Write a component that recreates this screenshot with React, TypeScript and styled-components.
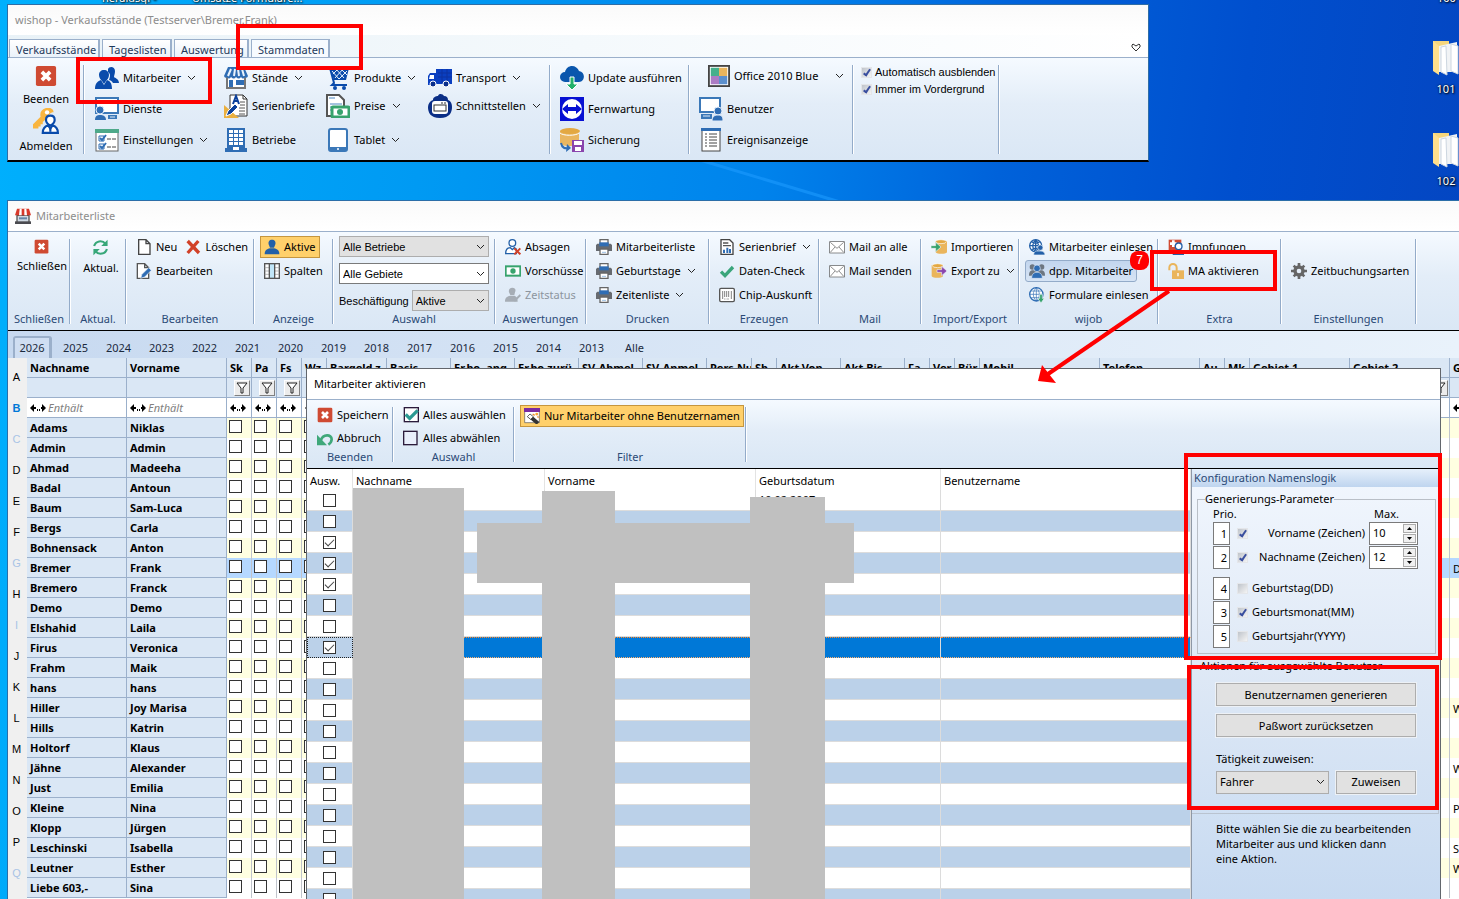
import React from "react";
import styled, { createGlobalStyle, css } from "styled-components";

const UI = '"Noto Sans", "Open Sans", sans-serif';
const PLAIN = '"Liberation Sans", Arial, sans-serif';
const LINE = "#9bb0cb";
const RIBBON = "linear-gradient(#f5faff, #e3edf8 45%, #dae7f5)";

const Global = createGlobalStyle`
  *, *::before, *::after { box-sizing: border-box; }
  html, body, #root { height: 100%; }
  body { margin: 0; overflow: hidden; font: 11px/16px ${UI}; color: #000; }
  button, input, select { font: inherit; color: inherit; margin: 0; }
`;

/* ---------- icons ---------- */

const shapes = {
  close: (
    <>
      <rect x="1" y="1" width="22" height="22" rx="2" fill="#cf4a32" />
      <path d="M7.500 7.500l9 9M16.500 7.500l-9 9" stroke="#fff" strokeWidth="4" />
    </>
  ),
  users: (
    <g fill="#0a4bab">
      <path d="M13 3c1-3 7-3 7 2 0 3-1 4-1 6 1 1 5 2 5 6h-6c-1-2-3-3-4-3 1-3 2-6-1-8z" />
      <path d="M9 4c3 0 5 2 5 5s-2 5-3 6l-2 3-2-3c-1-1-3-3-3-6s2-5 5-5z" />
      <path d="M0 23c0-6 3-8 6-9l3 5 3-5c3 1 5 3 5 9z" />
    </g>
  ),
  crowd: (
    <>
      <g fill="#6d7680">
        <circle cx="5" cy="6" r="4" />
        <circle cx="19" cy="6" r="4" />
        <path d="M0 19c0-6 2-8 6-8h12c4 0 6 2 6 8z" />
      </g>
      <circle cx="12" cy="8" r="5" fill="#2f6db4" stroke="#dfeaf7" />
      <path d="M4 23c0-6 3-9 8-9s8 3 8 9z" fill="#2f6db4" stroke="#dfeaf7" />
    </>
  ),
  keyUser: (
    <>
      <path d="M12 0c4-1 7 1 7 4-3 0-5 2-5 6l-3 1-2 2v2H7v2H5v2H0v-4l7-7c-1-4 1-7 5-8z" fill="#f9b53f" />
      <circle cx="13" cy="4" r="2" fill="#fff" />
      <path d="M16 7c3 0 4 2 4 4s-2 5-4 5-4-3-4-5 1-4 4-4z" fill="#fff" stroke="#0a4bab" strokeWidth="2" />
      <path d="M9 23c0-4 2-6 5-7l2 3 2-3c3 1 5 3 5 7z" fill="#fff" stroke="#0a4bab" strokeWidth="2" />
      <path d="M16 18v4" stroke="#0a4bab" strokeWidth="2" />
    </>
  ),
  pcUserLeft: (
    <>
      <rect x="1" y="1" width="22" height="15" fill="#fff" stroke="#3b78b8" strokeWidth="2" />
      <circle cx="5" cy="13" r="4" fill="#2f6db4" stroke="#e6effa" />
      <path d="M0 23c0-4 2-5 5-5s6 1 6 5z" fill="#2f6db4" />
      <path d="M13 18h9v4h-9z" fill="#3b78b8" />
      <path d="M15 20h5" stroke="#dfeaf7" />
    </>
  ),
  pcUser: (
    <>
      <rect x="1" y="1" width="20" height="14" fill="#fff" stroke="#3b78b8" strokeWidth="2" />
      <path d="M2 17h11v5H2z" fill="#3b78b8" />
      <path d="M4 19h7" stroke="#dfeaf7" />
      <circle cx="19" cy="14" r="4" fill="#2f6db4" stroke="#e6effa" />
      <path d="M13 24c0-4 2-6 6-6s5 2 5 6z" fill="#2f6db4" stroke="#e6effa" />
    </>
  ),
  checklist: (
    <>
      <rect x="1" y="2" width="22" height="21" fill="#fff" stroke="#666" />
      <path d="M0 1h24v4H0z" fill="#4ea98a" />
      <path d="M4 8h5v5H4zM4 16h5v5H4z" fill="none" stroke="#2f6db4" />
      <path d="M5 10l2 2 4-5M5 18l2 2 4-5" fill="none" stroke="#2f6db4" strokeWidth="2" />
      <path d="M12 11h4m1 0h4M12 19h4m1 0h4" stroke="#444" />
    </>
  ),
  store: (
    <>
      <path d="M3 10h18v12H3z" fill="#fff" stroke="#777" strokeWidth="2" />
      <path d="M4 1h16l4 9q-1 3-3 1-2 3-4 0-2 3-5 0-2 3-5 0-2 3-4 0-2 2-3-1z" fill="#2f6db4" />
      <path d="M7 3l-3 7M11 3l-1 7M14 3l1 7M18 3l2 7" stroke="#eaf3fc" strokeWidth="2" />
      <path d="M5 14h4v7H5zM12 14h8v5h-8z" fill="#2f6db4" />
    </>
  ),
  storeRed: (
    <>
      <path d="M3 11h18v11H3z" fill="#cfd9e3" stroke="#555" strokeWidth="2" />
      <path d="M0 20h24v4H0z" fill="#4a4a4f" />
      <path d="M3 1h18l3 10H0z" fill="#d8392b" />
      <path d="M7 1h3v10H6zM14 1h3l1 10h-4z" fill="#fff" />
      <path d="M6 14h12v3H6z" fill="#6787a8" />
    </>
  ),
  letterSet: (
    <>
      <path d="M6 1h13l4 4v17H6z" fill="#fff" stroke="#333" />
      <path d="M19 1v4h4" fill="none" stroke="#333" />
      <path d="M16 8h5M16 11h5M15 14h6M15 17h6M15 20h6" stroke="#555" />
      <path d="M9 10l3-8 3 8M10 7h4" fill="none" stroke="#0a3f9b" strokeWidth="2" />
      <path d="M0 11v13h15z" fill="#eab040" />
      <path d="M2 22l2-5 7-7 3 3-7 7z" fill="#0a3f9b" stroke="#fff" />
    </>
  ),
  building: (
    <>
      <path d="M3 0h18v21H3z" fill="#2f6db4" />
      <path d="M1 20h22v4H1z" fill="#2f6db4" />
      <path d="M5 2h4v3H5zm5 0h4v3h-4zm5 0h4v3h-4zM5 6h4v3H5zm5 0h4v3h-4zm5 0h4v3h-4zM5 10h4v3H5zm5 0h4v3h-4zm5 0h4v3h-4zM5 14h4v3H5zm5 0h4v3h-4zm5 0h4v3h-4z" fill="#fff" />
      <path d="M9 19h6v3H9z" fill="#fff" />
    </>
  ),
  cart: (
    <>
      <path d="M1 2h3l4 15-2 2h15" fill="none" stroke="#0a4bab" strokeWidth="2" />
      <path d="M4 2h19l-3 12H8z" fill="#0a4bab" />
      <path d="M6 5l7 8M10 3l8 9M15 3l6 6M21 5l-8 8M17 3l-8 9M12 3L7 8" stroke="#e6f0fb" />
      <circle cx="9" cy="22" r="2" fill="#0a4bab" />
      <circle cx="18" cy="22" r="2" fill="#0a4bab" />
    </>
  ),
  price: (
    <>
      <path d="M1 1h12l5 5v16H1z" fill="#fff" stroke="#555" strokeWidth="2" />
      <path d="M3 4h6M4 10h12M4 13h8M4 16h3" stroke="#4d86c0" />
      <rect x="6" y="13" width="17" height="10" rx="1" fill="#fff" stroke="#37a36d" strokeWidth="3" />
      <circle cx="14" cy="18" r="3" fill="#37a36d" />
    </>
  ),
  tablet: (
    <>
      <rect x="3" y="1" width="18" height="22" rx="2" fill="#fff" stroke="#3b78b8" strokeWidth="2" />
      <path d="M3 19h18v4H3z" fill="#3b78b8" />
      <circle cx="12" cy="21" r="1" fill="#fff" />
    </>
  ),
  truck: (
    <>
      <path d="M8 3h16v15H8zM0 10l2-3h6v12H0z" fill="#0a3fc0" />
      <path d="M2 9h4v4H1z" fill="#fff" />
      <path d="M10 7h14M10 11h14M14 3v14M19 3v14" stroke="#0d32a0" />
      <circle cx="5" cy="18" r="3" fill="#0a2f8b" stroke="#fff" />
      <circle cx="18" cy="18" r="3" fill="#0a2f8b" stroke="#fff" />
    </>
  ),
  interface: (
    <>
      <path d="M5 6c0-3 3-4 5-4 1-3 5-2 6 0 3 0 4 2 4 4 3 1 4 4 4 7 0 5-2 11-12 11S0 18 0 13c0-3 2-6 5-7z" fill="#0b2e86" />
      <rect x="4" y="7" width="16" height="13" rx="3" fill="#fff" />
      <rect x="6" y="11" width="12" height="6" fill="#fff" stroke="#333" strokeWidth="1" />
      <path d="M13 9h2M16 9h2" stroke="#333" />
    </>
  ),
  cloudDown: (
    <>
      <path d="M5 16a5 5 0 0 1 0-10c1-4 4-6 7-6s6 2 7 5c7 1 6 11 0 11z" fill="#0a56ad" />
      <path d="M10 11h4v7h4l-6 6-6-6h4z" fill="#22b06a" stroke="#fff" />
    </>
  ),
  remote: (
    <>
      <path d="M0 0h24v24H0z" fill="#0710d3" />
      <circle cx="12" cy="12" r="10" fill="#fff" />
      <path d="M2 12l6-5v3h8V7l6 5-6 5v-3H8v3z" fill="#0710d3" />
    </>
  ),
  backup: (
    <>
      <path d="M0 3v12c0 2 4 3 9 3s10-1 10-3V3z" fill="#e9b660" />
      <ellipse cx="10" cy="3" rx="10" ry="3" fill="#e3a842" />
      <path d="M0 5c3 3 16 3 19 0" fill="none" stroke="#fff" />
      <path d="M12 12h12v12H12z" fill="#8a45ad" />
      <path d="M14 13h8v4h-8zM15 19h6v4h-6z" fill="#fff" />
      <path d="M1 15c1 5 4 6 8 5" fill="none" stroke="#2f6db4" strokeWidth="2" />
      <path d="M7 16l4 4-5 4z" fill="#2f6db4" />
    </>
  ),
  swatch: (
    <>
      <rect x="1" y="1" width="22" height="22" fill="#fff" stroke="#444" strokeWidth="2" />
      <path d="M3 3h9v9H3z" fill="#45b08c" />
      <path d="M12 3h9v9h-9z" fill="#eab55c" />
      <path d="M3 12h9v9H3z" fill="#ab7cc4" />
      <path d="M12 12h9v9h-9z" fill="#5c90cd" />
    </>
  ),
  log: (
    <>
      <rect x="3" y="1" width="18" height="22" fill="#fff" stroke="#444" />
      <path d="M2 0h20v3H2z" fill="#2f6db4" />
      <path d="M6 6h2m2 0h8M6 9h2m2 0h8M6 12h2m2 0h8M6 15h2m2 0h8M6 18h2m2 0h8" stroke="#444" />
    </>
  ),
  refresh: (
    <>
      <path d="M3 10a9 9 0 0 1 16-3M21 14a9 9 0 0 1-16 3" fill="none" stroke="#37a779" strokeWidth="3" />
      <path d="M22 1v9h-9zM2 23v-9h9z" fill="#37a779" />
    </>
  ),
  file: <path d="M4 1h11l6 6v16H4zM15 1v6h6" fill="#fff" stroke="#444" strokeWidth="2" />,
  fileEdit: (
    <>
      <path d="M2 1h11l6 6v16H2zM13 1v6h6" fill="#fff" stroke="#555" strokeWidth="2" />
      <path d="M7 23l2-6 10-10 4 4-10 10z" fill="#2f6db4" stroke="#e6effa" />
    </>
  ),
  cross: <path d="M4 3l17 18M20 3L4 21" stroke="#d14128" strokeWidth="5" />,
  user: (
    <g fill="#2360a8">
      <path d="M12 1c4 0 6 3 5 7l-2 5H9L7 8c-1-4 1-7 5-7z" />
      <path d="M1 23c0-6 3-8 8-9h6c5 1 8 3 8 9z" />
    </g>
  ),
  columns: (
    <>
      <rect x="1" y="1" width="22" height="22" fill="#fff" stroke="#555" strokeWidth="2" />
      <path d="M1 7h22M1 12h22M1 17h22" stroke="#999" />
      <rect x="8" y="1" width="8" height="22" fill="#c1e6f8" stroke="#555" strokeWidth="2" />
    </>
  ),
  userX: (
    <>
      <circle cx="11" cy="6" r="5" fill="#fff" stroke="#2360a8" strokeWidth="2" />
      <path d="M1 22c0-6 3-9 7-9l3 3 3-3 3 2v7z" fill="#fff" stroke="#2360a8" strokeWidth="2" />
      <path d="M14 14l9 9M23 14l-9 9" stroke="#d14128" strokeWidth="3" />
    </>
  ),
  money: (
    <>
      <rect x="1" y="5" width="22" height="14" fill="#fff" stroke="#37a36d" strokeWidth="3" />
      <circle cx="12" cy="12" r="4" fill="#37a36d" />
    </>
  ),
  userCheck: (
    <>
      <path d="M11 1c4 0 6 3 4 7l-1 4H8L6 8c-1-4 1-7 5-7zM0 22c0-6 3-8 8-9h6c3 1 5 3 5 9z" fill="#a6adb5" />
      <path d="M11 16l4 4 8-8" fill="none" stroke="#a6adb5" strokeWidth="3" />
    </>
  ),
  printer: (
    <>
      <path d="M6 1h12v8H6z" fill="#fff" stroke="#666" strokeWidth="2" />
      <path d="M2 7h20l2 2v9H0V9z" fill="#666a70" />
      <path d="M5 5h14v6H5z" fill="#2f6db4" />
      <path d="M6 15h12v8H6z" fill="#fff" stroke="#666" strokeWidth="2" />
      <path d="M9 20h6" stroke="#6aa0d6" />
    </>
  ),
  report: (
    <>
      <path d="M3 1h13l5 5v17H3z" fill="#fff" stroke="#444" strokeWidth="2" />
      <path d="M6 6h8M6 10h12" stroke="#555" strokeWidth="2" />
      <path d="M6 16h3v5H6zM11 13h3v8h-3zM15 15h3v6h-3z" fill="#2f6db4" />
    </>
  ),
  check: <path d="M3 13l6 6L21 6" fill="none" stroke="#3aa57b" strokeWidth="5" />,
  barcode: (
    <>
      <rect x="1" y="2" width="22" height="20" rx="2" fill="#fff" stroke="#555" strokeWidth="2" />
      <path d="M5.500 6v12M8.500 6v9M11.500 6v9M14.500 6v9M18.500 6v12" stroke="#444" strokeWidth="1" />
      <path d="M8 18h8" stroke="#444" strokeDasharray="1 1" />
    </>
  ),
  mail: (
    <>
      <rect x="1" y="4" width="22" height="17" fill="#fff" stroke="#555" strokeWidth="1" />
      <path d="M2 5l10 9L22 5M2 20l7-8M22 20l-7-8" fill="none" stroke="#555" />
    </>
  ),
  dbIn: (
    <>
      <path d="M7 3v17c2 3 15 3 17 0V3z" fill="#eab55c" />
      <ellipse cx="15" cy="4" rx="8" ry="3" fill="#e3a842" stroke="#fff" />
      <path d="M0 10h7V5l8 7-8 7v-5H0z" fill="#37a36d" stroke="#e9f1fa" />
    </>
  ),
  dbOut: (
    <>
      <path d="M1 3v17c2 3 15 3 17 0V3z" fill="#eab55c" />
      <ellipse cx="10" cy="4" rx="8" ry="3" fill="#e3a842" stroke="#fff" />
      <path d="M9 10h7V5l8 7-8 7v-5H9z" fill="#8a45ad" stroke="#e9f1fa" />
    </>
  ),
  globeUser: (
    <>
      <circle cx="10" cy="10" r="9" fill="#fff" stroke="#2360a8" strokeWidth="2" />
      <path d="M1 10h18M10 1v18M4 4c4 3 8 3 12 0M4 16c4-3 8-3 12 0M10 1c-6 6-6 12 0 18M10 1c6 6 6 12 0 18" fill="none" stroke="#2360a8" strokeWidth="2" />
      <circle cx="17" cy="13" r="4" fill="#2360a8" stroke="#e9f1fa" />
      <path d="M7 24c0-5 3-6 5-6h6c3 0 6 2 6 6z" fill="#2360a8" stroke="#e9f1fa" />
    </>
  ),
  globeDown: (
    <>
      <circle cx="11" cy="11" r="10" fill="#fff" stroke="#2f6db4" strokeWidth="2" />
      <path d="M1 11h20M11 1v20M3 6h16M3 16h16M11 1c-6 6-6 14 0 20M11 1c6 6 6 14 0 20" fill="none" stroke="#2f6db4" />
      <path d="M16 11h4v6h3l-5 7-5-7h3z" fill="#37a36d" stroke="#e9f1fa" />
    </>
  ),
  vaccine: (
    <>
      <path d="M1 1h19v17H1z" fill="#d14b32" />
      <path d="M6 2h4v3h3v4h-3v3H6V9H3V5h3z" fill="#fff" />
      <circle cx="16" cy="11" r="5" fill="#fff" stroke="#2360a8" strokeWidth="2" />
      <path d="M7 24c0-5 3-7 9-7s8 2 8 7z" fill="#2360a8" />
    </>
  ),
  unlock: (
    <>
      <path d="M2 11V7a5 5 0 0 1 11 0v5" fill="none" stroke="#eab55c" strokeWidth="3" />
      <path d="M6 11h18v13H6z" fill="#eab55c" />
      <path d="M14 15h2v5h-2z" fill="#fff" />
    </>
  ),
  gear: (
    <>
      <circle cx="12" cy="12" r="6" fill="none" stroke="#666" strokeWidth="5" />
      <path d="M12 0v5M12 19v5M0 12h5M19 12h5M4 4l3 3M17 17l3 3M20 4l-3 3M7 17l-3 3" stroke="#666" strokeWidth="4" />
    </>
  ),
  undo: (
    <>
      <path d="M6 15c3-9 16-9 16-1 0 3-2 6-5 8" fill="none" stroke="#3fa87a" strokeWidth="4" />
      <path d="M0 7v16h15z" fill="#3fa87a" />
    </>
  ),
  boxChecked: (
    <>
      <rect x="2" y="1" width="21" height="21" fill="#fff" stroke="#2b1b3b" strokeWidth="2" />
      <path d="M4 11l6 6L22 5" fill="none" stroke="#2b9a93" strokeWidth="5" />
    </>
  ),
  box: <rect x="1" y="2" width="20" height="20" fill="#e9effb" stroke="#2b1b3b" strokeWidth="2" />,
  wizard: (
    <>
      <path d="M1 1h22v21H1z" fill="#fff" stroke="#555" />
      <path d="M0 0h24v6H0z" fill="#7a2ba0" />
      <path d="M13 9l3 2M20 8l-1 3M22 14l-2-1" stroke="#f08a28" strokeWidth="2" />
      <circle cx="19" cy="9" r="2" fill="#f6a435" />
      <path d="M5 13l4-4 14 12-4 4z" fill="#333" />
      <path d="M5 13l4-4 5 4-4 4z" fill="#fff" stroke="#333" />
    </>
  ),
};

type IconName = keyof typeof shapes;

const Svg = styled.svg<{ $s: number }>`
  display: block;
  flex: none;
  width: ${(p) => p.$s}px;
  height: ${(p) => p.$s}px;
`;

const Icon = ({ name, size = 16 }: { name: IconName; size?: number }) => (
  <Svg $s={size} viewBox="0 0 24 24" aria-hidden="true">
    {shapes[name]}
  </Svg>
);

const Arrow = styled.svg`
  display: block;
  flex: none;
  width: 9px;
  height: 6px;
  margin-left: 2px;
`;

const Down = () => (
  <Arrow viewBox="0 0 9 6" aria-hidden="true">
    <path d="M1 1l3.500 3.500L8 1" fill="none" stroke="#222" />
  </Arrow>
);

/* ---------- desktop ---------- */

const Desktop = styled.main`
  position: relative;
  height: 100vh;
  overflow: hidden;
  background: linear-gradient(97deg, #00b0fd, #009af3 28%, #0083ec 50%, #0062da 65%, #004fce 80%, #0543be);
`;

const Streak = styled.svg`
  position: absolute;
  left: 690px;
  top: 160px;
  width: 160px;
  height: 42px;
`;

const DeskItem = styled.div<{ $x: number; $y: number }>`
  position: absolute;
  left: ${(p) => p.$x}px;
  top: ${(p) => p.$y}px;
  display: flex;
  flex-direction: column;
  align-items: center;
  gap: 5px;
  color: #fff;
  white-space: nowrap;
  text-shadow: 1px 1px 2px #000, 0 0 2px #000;
`;

const FolderSvg = styled.svg`
  width: 28px;
  height: 36px;
`;

const Folder = () => (
  <FolderSvg viewBox="0 0 28 36" aria-hidden="true">
    <path d="M1 1h16v30l-10 1-6-3z" fill="#f6d67c" />
    <path d="M7 6l18-4v30H7z" fill="#f1f3f5" />
    <path d="M9 7l5-1 1 29-6-3zM19 4l7 2v28l-7-3z" fill="#fff" stroke="#cdd6e0" />
    <path d="M1 1l6 5v29l-6-4z" fill="#ffdf8c" />
  </FolderSvg>
);

/* ---------- windows ---------- */

const Window = styled.section<{ $z: number }>`
  position: absolute;
  z-index: ${(p) => p.$z};
  display: flex;
  flex-direction: column;
  overflow: hidden;
  background: #fff;
`;

const ShopWindow = styled(Window)`
  left: 7px;
  top: 4px;
  width: 1142px;
  border: 1px solid #2f6da5;
  border-bottom: 2px solid #000;
`;

const ListWindow = styled(Window)`
  left: 7px;
  top: 200px;
  right: 0;
  bottom: 0;
  border: solid #2b6ea8;
  border-width: 1px 0 0 1px;
`;

const Dialog = styled(Window)`
  left: 306px;
  top: 368px;
  right: 18px;
  bottom: 0;
  border: solid #62666c;
  border-width: 1px 1px 0;
`;

const TitleBar = styled.header<{ $active?: boolean }>`
  display: flex;
  align-items: center;
  gap: 5px;
  height: ${(p) => (p.$active ? 30 : 30)}px;
  flex: none;
  padding-left: 7px;
  color: ${(p) => (p.$active ? "#000" : "#8c8c8c")};
  background: ${(p) => (p.$active ? "#fff" : "linear-gradient(#fafafa, #fff)")};
`;

const Title = styled.h1`
  margin: 0;
  font: inherit;
`;

const TabStrip = styled.nav`
  display: flex;
  align-items: flex-end;
  gap: 2px;
  height: 23px;
  padding: 0 7px 0 1px;
  border-bottom: 1px solid ${LINE};
  background: linear-gradient(90deg, #e9f2f7, #f4f9fc 50%, #fff);
`;

const Tab = styled.button<{ $w: number; $on?: boolean }>`
  flex: none;
  width: ${(p) => p.$w}px;
  height: 18px;
  padding: 2px 0 0 6px;
  border: 1px solid ${LINE};
  border-bottom: 0;
  border-right: 2px solid ${LINE};
  background: ${(p) => (p.$on ? "#f7fbff" : "linear-gradient(#fff, #eaf2fa)")};
  color: #1e395b;
  line-height: 15px;
  text-align: left;
  white-space: nowrap;
`;

const Collapse = styled.button`
  margin: 0 0 2px auto;
  padding: 0;
  border: 0;
  background: none;
  width: 10px;
  height: 14px;
`;

const Ribbon = styled.div<{ $h: number }>`
  display: flex;
  flex: none;
  height: ${(p) => p.$h}px;
  background: ${RIBBON};
  white-space: nowrap;
`;

const Framed = styled(Ribbon)`
  border-top: 1px solid ${LINE};
  border-bottom: 1px solid #000;
`;

const Group = styled.div<{ $w: number }>`
  position: relative;
  display: flex;
  flex-direction: column;
  flex: none;
  width: ${(p) => p.$w}px;
  padding: 3px 0 0 6px;
  &::after {
    content: "";
    position: absolute;
    right: -1px;
    top: 7px;
    bottom: 6px;
    width: 2px;
    background: linear-gradient(90deg, #93abc9 50%, #fff 50%);
  }
`;

const Caption = styled.div`
  margin: auto 0 3px -6px;
  color: #2b4a76;
  text-align: center;
`;

const Line = styled.div<{ $h?: number; $gap?: number }>`
  display: flex;
  align-items: center;
  gap: ${(p) => p.$gap ?? 0}px;
  height: ${(p) => p.$h ?? 24}px;
`;

const toolState = {
  hot: css`
    border-color: #c5963f;
    background: #ffd06b;
  `,
  lit: css`
    border-color: #93abc9;
    border-radius: 3px;
    background: linear-gradient(#c3d6ee, #d6e4f5);
  `,
};

const Tool = styled.button<{ $state?: "hot" | "lit" }>`
  display: inline-flex;
  align-items: center;
  gap: 4px;
  height: 22px;
  padding: 0 3px;
  border: 1px solid transparent;
  background: none;
  white-space: nowrap;
  &:disabled {
    color: #8d959e;
  }
  ${(p) => p.$state && toolState[p.$state]}
`;

const BigTool = styled.button`
  display: flex;
  flex-direction: column;
  align-items: center;
  gap: 4px;
  padding: 0;
  border: 0;
  background: none;
`;

type Item = { icon: IconName; label: string; menu?: boolean; off?: boolean; state?: "hot" | "lit" };

const ToolItem = ({ icon, label, menu, off, state, size }: Item & { size?: number }) => (
  <Tool type="button" disabled={off} $state={state}>
    <Icon name={icon} size={size} />
    {label}
    {menu && <Down />}
  </Tool>
);

/* ---------- shop window ---------- */

const SessionGroup = styled(Group)`
  padding: 7px 0 0;
  gap: 1px;
`;

const ShopGroup = styled(Group)<{ $pad?: number }>`
  flex-direction: row;
  padding: 5px 0 0 ${(p) => p.$pad ?? 6}px;
`;

const Stack = styled.div<{ $rows: string; $w?: number }>`
  display: grid;
  grid-template-rows: ${(p) => p.$rows};
  align-items: center;
  justify-items: start;
  align-content: start;
  width: ${(p) => (p.$w ? `${p.$w}px` : "auto")};
`;

const EVEN = "30px 32px 30px";
const TIGHT = "30px 26px 42px";

const shopColumns: { w: number; rows: string; items: Item[] }[] = [
  {
    w: 129,
    rows: EVEN,
    items: [
      { icon: "users", label: "Mitarbeiter", menu: true },
      { icon: "pcUserLeft", label: "Dienste" },
      { icon: "checklist", label: "Einstellungen", menu: true },
    ],
  },
  {
    w: 102,
    rows: TIGHT,
    items: [
      { icon: "store", label: "Stände", menu: true },
      { icon: "letterSet", label: "Serienbriefe" },
      { icon: "building", label: "Betriebe" },
    ],
  },
  {
    w: 102,
    rows: TIGHT,
    items: [
      { icon: "cart", label: "Produkte", menu: true },
      { icon: "price", label: "Preise", menu: true },
      { icon: "tablet", label: "Tablet", menu: true },
    ],
  },
  {
    w: 120,
    rows: TIGHT,
    items: [
      { icon: "truck", label: "Transport", menu: true },
      { icon: "interface", label: "Schnittstellen", menu: true },
    ],
  },
];

const OfficeTool = styled(Tool)`
  margin-left: 9px;
  & > svg:last-child {
    margin-left: 13px;
  }
`;

const OptionList = styled.div`
  display: flex;
  flex-direction: column;
  gap: 1px;
  padding: 1px 0 0 3px;
  font-family: ${PLAIN};
`;

const Option = styled.label`
  display: flex;
  align-items: center;
  gap: 4px;
`;

const MiniCheck = styled.input.attrs({ type: "checkbox" })`
  appearance: none;
  display: grid;
  flex: none;
  width: 9px;
  height: 9px;
  background: linear-gradient(135deg, #bfc4cb, #f4f4f4);
  outline: 1px solid #e4e6ea;
  &:checked::after {
    content: "";
    width: 4px;
    height: 8px;
    margin-left: 3px;
    border: solid #3a4f9f;
    border-width: 0 2px 2px 0;
    transform: rotate(35deg);
  }
`;

const ShopApp = () => (
  <ShopWindow $z={1} aria-label="wishop">
    <TitleBar>
      <Title>wishop - Verkaufsstände (Testserver\Bremer.Frank)</Title>
    </TitleBar>
    <TabStrip>
      <Tab type="button" $w={91}>Verkaufsstände</Tab>
      <Tab type="button" $w={70}>Tageslisten</Tab>
      <Tab type="button" $w={75}>Auswertung</Tab>
      <Tab type="button" $w={79} $on>Stammdaten</Tab>
      <Collapse type="button" aria-label="Menüband einklappen">
        <svg width="10" height="10" viewBox="0 0 10 10" aria-hidden="true">
          <path d="M1 2l1-1 3 2 3-2 1 1v2L5 8 1 4z" fill="#fff" stroke="#333" />
        </svg>
      </Collapse>
    </TabStrip>
    <Ribbon $h={102}>
      <SessionGroup $w={76}>
        <BigTool type="button">
          <Icon name="close" size={22} />
          Beenden
        </BigTool>
        <BigTool type="button">
          <Icon name="keyUser" size={26} />
          Abmelden
        </BigTool>
      </SessionGroup>
      <ShopGroup $w={466} $pad={7}>
        {shopColumns.map((c) => (
          <Stack key={c.items[0].label} $rows={c.rows} $w={c.w}>
            {c.items.map((i) => (
              <ToolItem key={i.label} {...i} size={24} />
            ))}
          </Stack>
        ))}
      </ShopGroup>
      <ShopGroup $w={139}>
        <Stack $rows={EVEN}>
          <ToolItem icon="cloudDown" label="Update ausführen" size={24} />
          <ToolItem icon="remote" label="Fernwartung" size={24} />
          <ToolItem icon="backup" label="Sicherung" size={24} />
        </Stack>
      </ShopGroup>
      <ShopGroup $w={164}>
        <Stack $rows="26px 40px 22px">
          <OfficeTool type="button">
            <Icon name="swatch" size={22} />
            Office 2010 Blue
            <Down />
          </OfficeTool>
          <ToolItem icon="pcUser" label="Benutzer" size={24} />
          <ToolItem icon="log" label="Ereignisanzeige" size={24} />
        </Stack>
      </ShopGroup>
      <ShopGroup $w={146}>
        <OptionList>
          <Option>
            <MiniCheck defaultChecked /> Automatisch ausblenden
          </Option>
          <Option>
            <MiniCheck defaultChecked /> Immer im Vordergrund
          </Option>
        </OptionList>
      </ShopGroup>
    </Ribbon>
  </ShopWindow>
);

/* ---------- staff list window ---------- */

const Wide = styled.div`
  display: flex;
  justify-content: center;
  padding-top: 4px;
`;

const SelectBox = styled.span<{ $w: number; $h: number; $grey?: boolean }>`
  position: relative;
  display: block;
  width: ${(p) => p.$w}px;
  height: ${(p) => p.$h}px;
  & > select {
    appearance: none;
    width: 100%;
    height: 100%;
    padding: 0 3px;
    border: 1px solid ${(p) => (p.$grey ? "#adadad" : "#7a7a7a")};
    border-radius: 0;
    background: ${(p) => (p.$grey ? "#e1e1e1" : "#fff")};
  }
  & > svg {
    position: absolute;
    right: 4px;
    top: calc(50% - 3px);
  }
`;

const Picker = ({ label, value, w, h = 21, grey, id }: { label: string; value: string; w: number; h?: number; grey?: boolean; id?: string }) => (
  <SelectBox $w={w} $h={h} $grey={grey}>
    <select id={id} aria-label={label} defaultValue={value}>
      <option>{value}</option>
    </select>
    <Down />
  </SelectBox>
);

const Pickers = styled.div`
  display: flex;
  flex-direction: column;
  gap: 6px;
  padding-top: 1px;
  font-family: ${PLAIN};
`;

const listGroups: { name: string; w: number; items: (Item | null)[] }[] = [
  {
    name: "Auswertungen",
    w: 91,
    items: [
      { icon: "userX", label: "Absagen" },
      { icon: "money", label: "Vorschüsse" },
      { icon: "userCheck", label: "Zeitstatus", off: true },
    ],
  },
  {
    name: "Drucken",
    w: 123,
    items: [
      { icon: "printer", label: "Mitarbeiterliste" },
      { icon: "printer", label: "Geburtstage", menu: true },
      { icon: "printer", label: "Zeitenliste", menu: true },
    ],
  },
  {
    name: "Erzeugen",
    w: 110,
    items: [
      { icon: "report", label: "Serienbrief", menu: true },
      { icon: "check", label: "Daten-Check" },
      { icon: "barcode", label: "Chip-Auskunft" },
    ],
  },
  {
    name: "Mail",
    w: 102,
    items: [
      { icon: "mail", label: "Mail an alle" },
      { icon: "mail", label: "Mail senden" },
    ],
  },
  {
    name: "Import/Export",
    w: 98,
    items: [
      { icon: "dbIn", label: "Importieren" },
      { icon: "dbOut", label: "Export zu", menu: true },
    ],
  },
  {
    name: "wijob",
    w: 139,
    items: [
      { icon: "globeUser", label: "Mitarbeiter einlesen" },
      { icon: "crowd", label: "dpp. Mitarbeiter", state: "lit" },
      { icon: "globeDown", label: "Formulare einlesen" },
    ],
  },
  {
    name: "Extra",
    w: 123,
    items: [
      { icon: "vaccine", label: "Impfungen" },
      { icon: "unlock", label: "MA aktivieren" },
    ],
  },
  { name: "Einstellungen", w: 135, items: [null, { icon: "gear", label: "Zeitbuchungsarten" }] },
];

const YearBar = styled.nav`
  display: flex;
  align-items: flex-end;
  flex: none;
  height: 27px;
  padding-left: 5px;
  background: linear-gradient(90deg, #c7d9f0, #d6e4f5 40%, #e9f2fb);
`;

const Year = styled.button<{ $on?: boolean }>`
  width: ${(p) => (p.$on ? "39px" : "43px")};
  height: 22px;
  padding: ${(p) => (p.$on ? "0" : "2px 0 0")};
  margin-right: ${(p) => (p.$on ? "2px" : "0")};
  border: ${(p) => (p.$on ? "2px solid #9bb0cb" : "0")};
  border-bottom: 0;
  border-right-width: ${(p) => (p.$on ? "3px" : "0")};
  border-radius: 3px 3px 0 0;
  background: ${(p) => (p.$on ? "#cfdef2" : "none")};
  color: #1b2a3d;
`;

const ListBody = styled.div`
  display: flex;
  flex: 1;
  min-height: 0;
  overflow: hidden;
`;

const Letters = styled.nav`
  display: flex;
  flex-direction: column;
  flex: none;
  width: 19px;
  padding-top: 3px;
  background: #f0f0f0;
  font-family: ${PLAIN};
`;

const Letter = styled.button<{ $tone: string }>`
  flex: none;
  height: 31px;
  padding: 0 2px 0 0;
  border: 0;
  background: none;
  color: ${(p) => p.$tone};
  font-weight: ${(p) => (p.$tone === "#0078d7" ? 700 : 400)};
`;

const Scroller = styled.div`
  flex: 1;
  min-width: 0;
  overflow: hidden;
`;

const Grid = styled.table`
  table-layout: fixed;
  width: max(100%, 1520px);
  border-collapse: separate;
  border-spacing: 0;
  white-space: nowrap;
  & th,
  & td {
    height: 20px;
    padding: 0 0 0 3px;
    overflow: hidden;
    text-align: left;
    line-height: 15px;
    border-right: 1px solid ${LINE};
  }
  & thead th,
  & thead td {
    border-bottom: 1px solid ${LINE};
    background: #dae7f5;
  }
  & thead tr:last-child td {
    background: #fff;
  }
`;

const NameCell = styled.th`
  background: #dae7f5;
  border-bottom: 1px solid ${LINE};
`;

const DataRow = styled.tr<{ $bg: string }>`
  & > td {
    background: ${(p) => p.$bg};
    border-right-color: #c0c4cc;
  }
`;

const Check = styled.input.attrs({ type: "checkbox" })`
  appearance: none;
  display: grid;
  place-items: start center;
  width: 13px;
  height: 13px;
  border: 1px solid #333;
  background: #fff;
  &:checked::after {
    content: "";
    width: 5px;
    height: 9px;
    border: solid #444;
    border-width: 0 1px 1px 0;
    transform: rotate(45deg);
  }
`;

const ListCheck = styled(Check)`
  margin: 0 0 4px -1px;
`;

const FilterButton = styled.button`
  display: grid;
  place-items: center;
  width: 16px;
  height: 16px;
  margin: 0 1px 0 auto;
  padding: 0;
  border: 1px solid #fff;
  border-right-color: #808080;
  border-bottom-color: #808080;
  background: #ececec;
`;

const Contains = styled.label`
  display: flex;
  align-items: center;
  gap: 2px;
  & > input {
    width: 60px;
    padding: 0;
    border: 0;
    font-style: italic;
    background: none;
  }
  & > input::placeholder {
    color: #808080;
  }
`;

const Wild = () => (
  <svg width="16" height="8" viewBox="0 0 16 8" aria-hidden="true">
    <path d="M0 4l4-4v3h2v2H4v3zM16 4l-4-4v3h-1v2h1v3z" fill="#000" />
    <path d="M7 5h1v2H7zM9 5h1v2H9z" fill="#000" />
  </svg>
);

const columns: [string, number][] = [
  ["Nachname", 100], ["Vorname", 100], ["Sk", 25], ["Pa", 25], ["Fs", 25], ["Wz", 25],
  ["Bargeld z", 60], ["Basis", 64], ["Er.bo. ang", 64], ["Er.bo.zurü", 64], ["SV-Abmel", 64],
  ["SV-Anmel", 64], ["Pers.Nu", 45], ["Sb", 25], ["Akt.Von", 64], ["Akt.Bis", 64], ["Fa", 25],
  ["Ver", 25], ["Bür", 25], ["Mobil", 120], ["Telefon", 100], ["Au", 25], ["Mk", 25],
  ["Gebiet 1", 100], ["Gebiet 2", 100], ["Gebiet 3", 0],
];

const people: [string, string, string?][] = [
  ["Adams", "Niklas"], ["Admin", "Admin"], ["Ahmad", "Madeeha"], ["Badal", "Antoun"],
  ["Baum", "Sam-Luca"], ["Bergs", "Carla"], ["Bohnensack", "Anton"], ["Bremer", "Frank", "D"],
  ["Bremero", "Franck"], ["Demo", "Demo"], ["Elshahid", "Laila"], ["Firus", "Veronica"],
  ["Frahm", "Maik"], ["hans", "hans"], ["Hiller", "Joy Marisa", "W"], ["Hills", "Katrin"],
  ["Holtorf", "Klaus"], ["Jähne", "Alexander", "W"], ["Just", "Emilia"], ["Kleine", "Nina", "Pa"],
  ["Klopp", "Jürgen"], ["Leschinski", "Isabella", "Sp"], ["Leutner", "Esther", "W"],
  ["Liebe 603,-", "Sina"],
];

const years = ["2026", "2025", "2024", "2023", "2022", "2021", "2020", "2019", "2018", "2017", "2016", "2015", "2014", "2013", "Alle"];

const letterTone = (l: string) => (l === "B" ? "#0078d7" : "CGIQ".includes(l) ? "#a9c4e6" : "#000");

const StaffList = () => (
  <ListWindow $z={2} aria-label="Mitarbeiterliste">
    <TitleBar>
      <Icon name="storeRed" />
      <Title>Mitarbeiterliste</Title>
    </TitleBar>
    <Framed $h={100}>
      <Group $w={62}>
        <Wide>
          <BigTool type="button">
            <Icon name="close" size={15} />
            Schließen
          </BigTool>
        </Wide>
        <Caption>Schließen</Caption>
      </Group>
      <Group $w={56}>
        <Wide>
          <BigTool type="button">
            <Icon name="refresh" size={17} />
            Aktual.
          </BigTool>
        </Wide>
        <Caption>Aktual.</Caption>
      </Group>
      <Group $w={128}>
        <Line>
          <ToolItem icon="file" label="Neu" />
          <ToolItem icon="cross" label="Löschen" />
        </Line>
        <Line>
          <ToolItem icon="fileEdit" label="Bearbeiten" />
        </Line>
        <Caption>Bearbeiten</Caption>
      </Group>
      <Group $w={79}>
        <Line>
          <ToolItem icon="user" label="Aktive" state="hot" />
        </Line>
        <Line>
          <ToolItem icon="columns" label="Spalten" />
        </Line>
        <Caption>Anzeige</Caption>
      </Group>
      <Group $w={162}>
        <Pickers>
          <Picker label="Betrieb" value="Alle Betriebe" w={150} grey />
          <Picker label="Gebiet" value="Alle Gebiete" w={150} />
          <Line $h={21} $gap={3}>
            <label htmlFor="employment">Beschäftigung</label>
            <Picker id="employment" label="Beschäftigung" value="Aktive" w={77} grey />
          </Line>
        </Pickers>
        <Caption>Auswahl</Caption>
      </Group>
      {listGroups.map((g) => (
        <Group key={g.name} $w={g.w}>
          {g.items.map((i, n) => (
            <Line key={n}>{i && <ToolItem {...i} />}</Line>
          ))}
          <Caption>{g.name}</Caption>
        </Group>
      ))}
    </Framed>
    <YearBar>
      {years.map((y, n) => (
        <Year key={y} type="button" $on={n === 0}>{y}</Year>
      ))}
    </YearBar>
    <ListBody>
      <Letters>
        {"ABCDEFGHIJKLMNOPQ".split("").map((l) => (
          <Letter key={l} type="button" $tone={letterTone(l)}>{l}</Letter>
        ))}
      </Letters>
      <Scroller>
        <Grid>
          <colgroup>
            {columns.map(([name, w]) => (
              <col key={name} width={w || undefined} />
            ))}
          </colgroup>
          <thead>
            <tr>
              {columns.map(([name]) => (
                <th key={name} scope="col">{name}</th>
              ))}
            </tr>
            <tr>
              {columns.map(([name], n) => (
                <td key={name}>
                  {n > 1 && (
                    <FilterButton type="button" aria-label={`Filter ${name}`}>
                      <svg width="12" height="12" viewBox="0 0 12 12" aria-hidden="true">
                        <path d="M1 1h10L7 6v5H5V6z" fill="#fff" stroke="#222" />
                      </svg>
                    </FilterButton>
                  )}
                </td>
              ))}
            </tr>
            <tr>
              {columns.map(([name], n) => (
                <td key={name}>
                  <Contains>
                    <Wild />
                    {n < 2 && <input placeholder="Enthält" aria-label={`${name} enthält`} />}
                  </Contains>
                </td>
              ))}
            </tr>
          </thead>
          <tbody>
            {people.map(([last, first, area], r) => (
              <DataRow key={r} $bg={last === "Bremer" ? "#b5d8ff" : r % 2 ? "#fff" : "#ffffe1"}>
                <NameCell scope="row">{last}</NameCell>
                <NameCell>{first}</NameCell>
                {columns.slice(2).map(([name], n) => (
                  <td key={name}>
                    {n < 4 && <ListCheck aria-label={`${name} ${first} ${last}`} />}
                    {name === "Gebiet 3" && area}
                  </td>
                ))}
              </DataRow>
            ))}
          </tbody>
        </Grid>
      </Scroller>
    </ListBody>
  </ListWindow>
);

/* ---------- activation dialog ---------- */

const DialogGroup = styled(Group)`
  padding-top: 4px;
`;

const DialogBody = styled.div`
  display: flex;
  flex: 1;
  min-height: 0;
  overflow: hidden;
`;

const TablePane = styled.div`
  flex: 1;
  min-width: 0;
  overflow: hidden;
`;

const Accounts = styled.table`
  table-layout: fixed;
  width: 100%;
  border-collapse: separate;
  border-spacing: 0;
  & th {
    height: 21px;
    padding: 2px 0 0 3px;
    font-weight: 400;
    text-align: left;
    border-right: 1px solid #e3e3e3;
  }
  & td {
    height: 21px;
    padding: 0 0 0 3px;
    line-height: 16px;
    border-right: 1px solid #dcdcdc;
    border-bottom: 1px solid #dcdcdc;
  }
`;

const AccountRow = styled.tr<{ $alt: boolean; $sel: boolean }>`
  & > td {
    background: ${(p) => (p.$sel ? "#0078d7" : p.$alt ? "#bbd1e9" : "#fff")};
    ${(p) => p.$sel && "border-top: 1px dotted #ff8728; border-bottom: 1px dotted #ffb070;"}
  }
  & > td:first-child {
    background: ${(p) => (p.$alt ? "#bbd1e9" : "#fff")};
    ${(p) => p.$sel && "outline: 1px dotted #222; outline-offset: -1px; border-color: #bbd1e9;"}
  }
  & input {
    margin: 0 0 0 13px;
  }
`;

const Side = styled.aside`
  display: flex;
  flex-direction: column;
  flex: none;
  width: 249px;
  border-left: 1px solid #8e98a6;
  background: linear-gradient(#f2f7fe, #dfe9f6 45%, #c7daf1);
`;

const SideTitle = styled.h2`
  margin: 0;
  height: 18px;
  padding-left: 2px;
  font: inherit;
  line-height: 17px;
  color: #2b4a76;
  background: linear-gradient(#e6f0fb, #bfd5ef);
`;

const Params = styled.fieldset`
  margin: 4px 4px 0 5px;
  padding: 0 17px 5px 15px;
  border: 1px solid #b9bfc7;
  min-width: 0;
`;

const Legend = styled.legend`
  margin-left: -8px;
  padding: 0;
  line-height: 16px;
`;

const ParamHead = styled.div`
  display: flex;
  justify-content: space-between;
  padding-right: 19px;
  line-height: 14px;
`;

const ParamRow = styled.div`
  display: grid;
  grid-template-columns: 17px 9px 1fr auto;
  align-items: center;
  column-gap: 8px;
  height: 24px;
  & > label {
    margin-left: -3px;
  }
`;

const NumRow = styled(ParamRow)`
  column-gap: 4px;
  grid-template-columns: 21px 13px 1fr auto;
  & > label {
    margin: 0;
    text-align: right;
  }
`;

const Prio = styled.input`
  width: 17px;
  height: 23px;
  padding: 0 2px 0 0;
  border: 1px solid #7a7a7a;
  background: #fff;
  text-align: right;
`;

const Spin = styled.span`
  display: flex;
  align-items: center;
  width: 49px;
  height: 23px;
  padding-right: 1px;
  border: 1px solid #7a7a7a;
  background: #fff;
  & > input {
    flex: 1;
    min-width: 0;
    padding: 0 0 0 3px;
    border: 0;
    background: none;
  }
`;

const Steps = styled.span`
  display: grid;
  gap: 1px;
  & > button {
    display: grid;
    place-items: center;
    width: 13px;
    height: 9px;
    padding: 0;
    border: 1px solid #acacac;
    background: #f0f0f0;
  }
`;

const Spinner = ({ id, value }: { id: string; value: string }) => (
  <Spin>
    <input id={id} defaultValue={value} />
    <Steps>
      <button type="button" aria-label="mehr">
        <svg width="5" height="3" viewBox="0 0 5 3"><path d="M0 3l2.500-3L5 3z" /></svg>
      </button>
      <button type="button" aria-label="weniger">
        <svg width="5" height="3" viewBox="0 0 5 3"><path d="M0 0l2.500 3L5 0z" /></svg>
      </button>
    </Steps>
  </Spin>
);

const Spacer = styled.div`
  height: 7px;
`;

const Actions = styled.fieldset`
  margin: 4px 1px 0 0;
  padding: 9px 22px 19px 24px;
  border: 1px solid #b9c3d0;
  border-left: 0;
  min-width: 0;
  & > legend {
    margin-left: -16px;
  }
`;

const PushButton = styled.button<{ $w?: number }>`
  display: block;
  width: ${(p) => (p.$w ? `${p.$w}px` : "100%")};
  height: 23px;
  padding: 0;
  border: 1px solid #adadad;
  outline: 1px solid #edf1f6;
  background: #e1e1e1;
  & + & {
    margin-top: 8px;
  }
`;

const AssignLabel = styled.label`
  display: block;
  margin: 14px 0 3px;
`;

const Hint = styled.p`
  margin: 7px 20px 0 24px;
  line-height: 15px;
`;

const numberParams = [
  { prio: "1", id: "first", label: "Vorname (Zeichen)", value: "10" },
  { prio: "2", id: "last", label: "Nachname (Zeichen)", value: "12" },
];
const dateParams = [
  { prio: "4", id: "day", label: "Geburtstag(DD)", on: false },
  { prio: "3", id: "month", label: "Geburtsmonat(MM)", on: true },
  { prio: "5", id: "year", label: "Geburtsjahr(YYYY)", on: false },
];
const ticked = [2, 3, 4, 7];

const ActivateDialog = () => (
  <Dialog $z={3} role="dialog" aria-label="Mitarbeiter aktivieren">
    <TitleBar $active>
      <Title>Mitarbeiter aktivieren</Title>
    </TitleBar>
    <Framed $h={70}>
      <DialogGroup $w={86}>
        <Line $h={23}><ToolItem icon="close" label="Speichern" /></Line>
        <Line $h={23}><ToolItem icon="undo" label="Abbruch" /></Line>
        <Caption>Beenden</Caption>
      </DialogGroup>
      <DialogGroup $w={121}>
        <Line $h={23}><ToolItem icon="boxChecked" label="Alles auswählen" /></Line>
        <Line $h={23}><ToolItem icon="box" label="Alles abwählen" /></Line>
        <Caption>Auswahl</Caption>
      </DialogGroup>
      <DialogGroup $w={232}>
        <Line $h={23}><ToolItem icon="wizard" label="Nur Mitarbeiter ohne Benutzernamen" state="hot" /></Line>
        <Caption>Filter</Caption>
      </DialogGroup>
    </Framed>
    <DialogBody>
      <TablePane>
        <Accounts>
          <colgroup>
            <col width="46" />
            <col width="192" />
            <col width="211" />
            <col width="185" />
            <col />
          </colgroup>
          <thead>
            <tr>
              {["Ausw.", "Nachname", "Vorname", "Geburtsdatum", "Benutzername"].map((h) => (
                <th key={h} scope="col">{h}</th>
              ))}
            </tr>
          </thead>
          <tbody>
            {Array.from({ length: 20 }, (_, r) => (
              <AccountRow key={r} $alt={r % 2 === 1} $sel={r === 7}>
                <td>
                  <Check defaultChecked={ticked.includes(r)} aria-label={`Zeile ${r + 1} auswählen`} />
                </td>
                <td />
                <td />
                <td>{r === 0 && "10.02.2007"}</td>
                <td />
              </AccountRow>
            ))}
          </tbody>
        </Accounts>
      </TablePane>
      <Side>
        <SideTitle>Konfiguration Namenslogik</SideTitle>
        <Params>
          <Legend>Generierungs-Parameter</Legend>
          <ParamHead>
            <span>Prio.</span>
            <span>Max.</span>
          </ParamHead>
          {numberParams.map((p) => (
            <NumRow key={p.id}>
              <Prio aria-label={`Prio. ${p.label}`} defaultValue={p.prio} />
              <MiniCheck defaultChecked aria-label={`${p.label} verwenden`} />
              <label htmlFor={p.id}>{p.label}</label>
              <Spinner id={p.id} value={p.value} />
            </NumRow>
          ))}
          <Spacer />
          {dateParams.map((p) => (
            <ParamRow key={p.id}>
              <Prio aria-label={`Prio. ${p.label}`} defaultValue={p.prio} />
              <MiniCheck id={p.id} defaultChecked={p.on} />
              <label htmlFor={p.id}>{p.label}</label>
            </ParamRow>
          ))}
        </Params>
        <Actions>
          <Legend>Aktionen für ausgewählte Benutzer</Legend>
          <PushButton type="button">Benutzernamen generieren</PushButton>
          <PushButton type="button">Paßwort zurücksetzen</PushButton>
          <AssignLabel htmlFor="task">Tätigkeit zuweisen:</AssignLabel>
          <Line $gap={7}>
            <Picker id="task" label="Tätigkeit zuweisen" value="Fahrer" w={113} h={23} grey />
            <PushButton type="button" $w={80}>Zuweisen</PushButton>
          </Line>
        </Actions>
        <Hint>
          Bitte wählen Sie die zu bearbeitenden
          <br />
          Mitarbeiter aus und klicken dann
          <br />
          eine Aktion.
        </Hint>
      </Side>
    </DialogBody>
  </Dialog>
);

/* ---------- overlays ---------- */

const Cover = styled.div<{ $x: number; $y: number; $w: number; $h?: number }>`
  position: absolute;
  z-index: 4;
  left: ${(p) => p.$x}px;
  top: ${(p) => p.$y}px;
  width: ${(p) => p.$w}px;
  ${(p) => (p.$h ? `height: ${p.$h}px;` : "bottom: 0;")}
  background: #c0c0c0;
`;

const Mark = styled.div<{ $x: number; $y: number; $w: number; $h: number }>`
  position: absolute;
  z-index: 5;
  left: ${(p) => p.$x}px;
  top: ${(p) => p.$y}px;
  width: ${(p) => p.$w}px;
  height: ${(p) => p.$h}px;
  border: 4px solid #f00;
  pointer-events: none;
`;

const Pointer = styled.svg`
  position: absolute;
  z-index: 5;
  left: 1036px;
  top: 286px;
  width: 140px;
  height: 100px;
  pointer-events: none;
`;

const Badge = styled.span`
  position: absolute;
  z-index: 4;
  left: 1130px;
  top: 251px;
  width: 19px;
  height: 19px;
  border-radius: 8px;
  background: #f00;
  color: #fff;
  font: 12px/19px ${PLAIN};
  text-align: center;
`;

export default function App() {
  return (
    <>
      <Global />
      <Desktop>
        <Streak viewBox="0 0 160 42" aria-hidden="true">
          <path d="M10 0L150 42" stroke="#1d9bff" strokeWidth="3" opacity="0.6" />
        </Streak>
        <DeskItem $x={102} $y={-10}>heraldsql -</DeskItem>
        <DeskItem $x={192} $y={-10}>Umsätze Formulare...</DeskItem>
        <DeskItem $x={1437} $y={-10}>100</DeskItem>
        <DeskItem $x={1432} $y={40}><Folder />101</DeskItem>
        <DeskItem $x={1432} $y={132}><Folder />102</DeskItem>
        <ShopApp />
        <StaffList />
        <ActivateDialog />
        <Cover $x={353} $y={488} $w={111} />
        <Cover $x={477} $y={523} $w={377} $h={60} />
        <Cover $x={542} $y={491} $w={73} />
        <Cover $x={750} $y={497} $w={75} />
        <Badge>7</Badge>
        <Mark $x={236} $y={24} $w={127} $h={46} />
        <Mark $x={76} $y={57} $w={136} $h={47} />
        <Mark $x={1150} $y={250} $w={127} $h={41} />
        <Mark $x={1184} $y={453} $w={258} $h={207} />
        <Mark $x={1187} $y={665} $w={252} $h={145} />
        <Pointer viewBox="0 0 140 100" aria-hidden="true">
          <path d="M133 5L12 88" stroke="#f00" strokeWidth="4" />
          <path d="M2 95L6 79 20 97z" fill="#f00" />
        </Pointer>
      </Desktop>
    </>
  );
}
